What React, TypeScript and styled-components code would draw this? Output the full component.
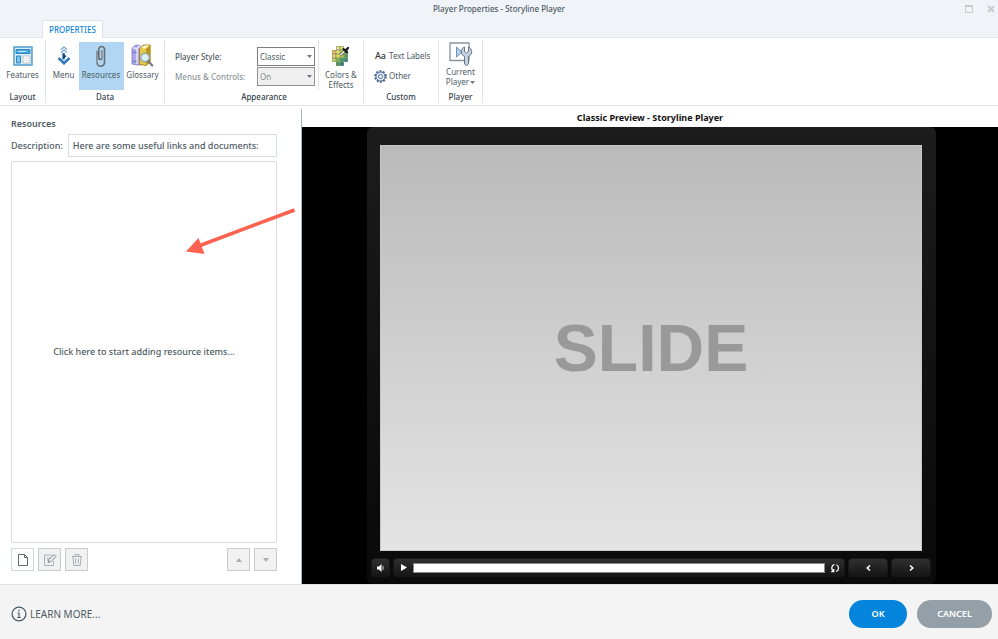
import React from 'react';
import styled, { createGlobalStyle, css } from 'styled-components';

const GlobalStyle = createGlobalStyle`
  *, *::before, *::after { box-sizing: border-box; }
  body { margin: 0; background: #f4f4f4; }
  button, input, select { font: inherit; color: inherit; margin: 0; padding: 0; border-radius: 0; }
  button { background: none; border: 0; cursor: pointer; }
  button:disabled { cursor: default; }
  svg { display: block; flex: none; }
`;

const Window = styled.div`
  display: flex;
  flex-direction: column;
  min-height: 100vh;
  background: #fff;
  color: #4d5b64;
  font-family: 'Noto Sans', 'Open Sans', sans-serif;
  font-size: 8px;
  line-height: 10px;
`;

const TitleBar = styled.header`
  display: grid;
  grid-template-columns: 1fr auto 1fr;
  align-items: center;
  height: 18px;
  padding: 0 2px;
  background: #f0f4f8;
`;

const WindowTitle = styled.h1`
  grid-column: 2;
  margin: 0;
  font-size: 8px;
  font-weight: 500;
`;

const WindowActions = styled.div`
  display: flex;
  justify-content: flex-end;
  gap: 12px;
  color: #c9c9c9;
`;

const TabBar = styled.nav`
  display: flex;
  height: 20px;
  padding: 2px 42px 0;
  background: #f0f4f8;
  border-bottom: 1px solid #dfe6eb;
`;

const Tab = styled.button`
  height: 18px;
  padding: 0 6px;
  background: #fff;
  border: 1px solid #dbe4ea;
  border-bottom: 0;
  color: #0f83dc;
  font-weight: 500;
  white-space: nowrap;
`;

const Ribbon = styled.div`
  display: flex;
  height: 68px;
  padding-top: 2px;
  border-bottom: 1px solid #e2e4e6;
`;

const Group = styled.section<{ $width: number }>`
  display: flex;
  flex-direction: column;
  flex: none;
  width: ${(p) => p.$width}px;
  height: 63px;
  border-right: 1px solid #dfe5e9;
`;

const GroupBody = styled.div`
  display: flex;
  flex: 1;
  justify-content: center;
`;

const GroupName = styled.h2`
  margin: 0;
  padding-bottom: 1px;
  font-size: 8px;
  font-weight: 500;
  line-height: 10px;
  text-align: center;
  color: #36434b;
`;

const Tool = styled.button<{ $width: number; $active?: boolean }>`
  display: flex;
  flex-direction: column;
  align-items: center;
  flex: none;
  width: ${(p) => p.$width}px;
  height: 48px;
  margin-top: 2px;
  white-space: nowrap;
  background: ${(p) => (p.$active ? '#b0d6f3' : 'transparent')};
`;

const ToolIcon = styled.span`
  display: flex;
  align-items: center;
  justify-content: center;
  height: 28px;
`;

const AppearanceFields = styled.div`
  display: grid;
  grid-template-columns: 82px 58px;
  grid-template-rows: 19px 19px;
  row-gap: 1px;
  align-items: center;
  align-content: start;
  flex: 1;
  height: 50px;
  padding: 7px 0 0 10px;
  border-right: 1px solid #dfe5e9;
`;

const FieldLabel = styled.label<{ $muted?: boolean }>`
  font-weight: 500;
  color: ${(p) => (p.$muted ? '#8d969c' : 'inherit')};
`;

const SelectBox = styled.div`
  display: grid;
  align-items: center;
  svg { grid-area: 1 / 1; justify-self: end; margin-right: 3px; pointer-events: none; }
`;

const Select = styled.select`
  grid-area: 1 / 1;
  appearance: none;
  width: 58px;
  height: 19px;
  padding-left: 2px;
  background: #fff;
  border: 1px solid #7b7d7f;
  &:disabled { background: #f0f0f0; color: #8a8a8a; opacity: 1; border-color: #909294; }
`;

const CustomList = styled.div`
  display: flex;
  flex-direction: column;
  align-items: flex-start;
  flex: 1;
  gap: 4px;
  padding: 8px 0 0 10px;
`;

const CustomItem = styled.button`
  display: flex;
  align-items: center;
  gap: 2px;
  height: 16px;
  white-space: nowrap;
`;

const LetterIcon = styled.span`
  width: 13px;
  font-size: 9px;
  font-weight: 500;
  color: #35383b;
`;

const Caret = styled.span`
  display: inline-block;
  margin-left: 1px;
  vertical-align: middle;
`;

const Main = styled.main`
  display: flex;
  flex: 1;
  padding-top: 3px;
`;

const Sidebar = styled.section`
  display: flex;
  flex-direction: column;
  flex: none;
  width: 302px;
  padding: 9px 24px 13px 11px;
  border-right: 1px solid #a9b3bb;
  font-size: 9px;
  font-weight: 500;
  line-height: 12px;
`;

const SidebarTitle = styled.h2`
  margin: 0 0 4px;
  font-size: 9px;
  font-weight: 600;
  line-height: 12px;
`;

const DescriptionRow = styled.div`
  display: flex;
  align-items: center;
  gap: 5px;
  margin-bottom: 4px;
`;

const DescriptionInput = styled.input`
  flex: 1;
  min-width: 0;
  height: 23px;
  padding: 0 4px;
  border: 1px solid #d5dfe5;
`;

const ResourceList = styled.button`
  flex: 1;
  border: 1px solid #d9dde0;
`;

const ItemToolbar = styled.div`
  display: flex;
  gap: 4px;
  margin-top: 5px;
`;

const IconButton = styled.button`
  display: flex;
  align-items: center;
  justify-content: center;
  width: 23px;
  height: 23px;
  background: #fff;
  border: 1px solid #cfdae1;
  color: #5d6b73;
  &:disabled { background: #f1f1f1; border-color: #c9cccf; color: #abafb2; }
`;

const Spacer = styled.span`
  flex: 1;
`;

const Preview = styled.section`
  display: flex;
  flex-direction: column;
  flex: 1;
  min-width: 0;
`;

const PreviewTitle = styled.h2`
  margin: 0;
  font-size: 9px;
  font-weight: 700;
  line-height: 18px;
  text-align: center;
  color: #111;
`;

const Stage = styled.div`
  display: flex;
  flex: 1;
  padding: 0 62px 0 65px;
  background: #000;
`;

const Player = styled.div`
  display: flex;
  flex-direction: column;
  flex: 1;
  padding: 18px 14px 0 13px;
  border-radius: 6px;
  background: linear-gradient(#1c1c1c, #0b0b0b 85%);
`;

const Slide = styled.div`
  display: flex;
  align-items: center;
  justify-content: center;
  flex: 1;
  border: 1px solid #c5c9c9;
  background: linear-gradient(#bababa, #e4e4e4);
  font-family: 'Liberation Sans', Arial, sans-serif;
  font-size: 66px;
  font-weight: 700;
  line-height: 76px;
  color: #999;
`;

const Controls = styled.div`
  display: flex;
  gap: 5px;
  height: 33px;
  margin: 0 -8px;
  padding-top: 8px;
  color: #fff;
`;

const controlFace = css`
  display: flex;
  align-items: center;
  justify-content: center;
  height: 17px;
  border-radius: 3px;
  background: linear-gradient(#303030, #151515);
  box-shadow: 0 0 0 1px #181818;
`;

const ControlButton = styled.button<{ $width: number }>`
  ${controlFace}
  width: ${(p) => p.$width}px;
`;

const SeekBar = styled.div`
  ${controlFace}
  flex: 1;
`;

const SeekButton = styled.button`
  display: flex;
  align-items: center;
  justify-content: center;
  width: 19px;
  height: 17px;
`;

const SeekTrack = styled.input`
  appearance: none;
  flex: 1;
  min-width: 0;
  height: 10px;
  background: #fff;
  border: 1px solid #888;
  &::-webkit-slider-thumb { appearance: none; width: 1px; height: 8px; background: #fff; }
`;

const Footer = styled.footer`
  display: flex;
  align-items: center;
  height: 55px;
  padding: 3px 6px 0 11px;
  background: #f4f4f4;
  border-top: 1px solid #dfe4e6;
  font-size: 10px;
`;

const LearnMore = styled.a`
  display: flex;
  align-items: center;
  gap: 3px;
  color: #4d5b64;
  text-decoration: none;
`;

const PillButton = styled.button<{ $primary?: boolean }>`
  min-width: ${(p) => (p.$primary ? 58 : 75)}px;
  height: 28px;
  margin-left: 10px;
  padding: 0 16px;
  border-radius: 14px;
  background: ${(p) => (p.$primary ? '#0584dc' : '#949fa8')};
  color: #fff;
  font-size: 9px;
  font-weight: 600;
`;

const Pointer = styled.svg`
  position: absolute;
  left: 184px;
  top: 206px;
  pointer-events: none;
`;

const DropIcon = () => (
  <svg width="5" height="3" viewBox="0 0 5 3"><path d="M0 0h5L2.5 3z" fill="#727779" /></svg>
);

const FeaturesIcon = () => (
  <svg width="20" height="20" viewBox="0 0 20 20">
    <rect x="1" y="1" width="18" height="18" fill="#d8eefb" stroke="#4898c6" strokeWidth="1.4" />
    <path d="M3 3.5h14v4H3z" fill="#48a9df" stroke="#3389bd" />
    <path d="M5 5.5h8" stroke="#c6e8fa" />
    <path d="M3.5 10h4v7h-4z" fill="#79c3e9" stroke="#3389bd" />
    <path d="M10 10h7v7h-7z" fill="#fff" stroke="#bcc2c6" />
    <path d="M11.5 12.5h4M11.5 14.5h4" stroke="#ddd" />
  </svg>
);

const MenuIcon = () => (
  <svg width="14" height="20" viewBox="0 0 14 20" fill="none">
    <path d="M4 3.500l3-2.500 3 2.500M4 6.500l3-2.500 3 2.500" stroke="#6da0d0" strokeWidth="1.200" />
    <path d="M6.500 7v6.500" stroke="#5c97cd" strokeWidth="3" />
    <path d="M6 7l3.500 3.200L6 13.500z" fill="#164983" />
    <path d="M1.500 12L7 17.200l5.500-5.200" stroke="#3479bd" strokeWidth="2.600" />
  </svg>
);

const ClipIcon = () => (
  <svg width="12" height="24" viewBox="0 0 12 24" fill="none" strokeLinecap="round">
    <path d="M2 7.500v11a3.600 3.600 0 0 0 7.500 0V4.500a3 3 0 0 0-5.700 0V14a1.500 1.500 0 0 0 3 0V7" stroke="#656c73" strokeWidth="1.600" />
    <path d="M2 8v10.500M6.800 8v6" stroke="#c5ccd2" strokeWidth=".6" />
  </svg>
);

const GlossaryIcon = () => (
  <svg width="23" height="24" viewBox="0 0 23 24">
    <path d="M1 4l4-3 4.500.5V21H6.500L1 20z" fill="#aaa7ed" stroke="#7d7abf" strokeWidth=".8" />
    <path d="M1.800 3.800L6 4.500V20M6.500 4l3-2.500" stroke="#f6f5ff" strokeWidth="1.200" fill="none" />
    <path d="M1.500 8l4 .5M1.500 17l4 .5" stroke="#6d68b8" />
    <path d="M8.500 4.500L12.500 1H19v17l-4 3.500-6.500-1z" fill="#e3c84d" stroke="#967613" strokeWidth=".8" />
    <path d="M9.500 4l4.500-2.500h4L14.500 4.500z" fill="#fff9cf" />
    <path d="M15 5l4.500-4v17L15 21.500z" fill="#b99618" />
    <circle cx="14" cy="13.500" r="4.200" fill="#d8effa" stroke="#8ba5b2" strokeWidth="1.200" />
    <path d="M17.200 17l4 4.500" stroke="#77797c" strokeWidth="2.200" strokeLinecap="round" />
  </svg>
);

const ColorCells: Array<[number, number, string]> = [
  [4, 1, '#e9dc9a'], [8, 1, '#e8e26d'],
  [0, 5, '#f2b45a'], [4, 5, '#f4e661'], [8, 5, '#d5dc4e'], [12, 5, '#8fbf55'],
  [0, 9, '#ecca78'], [4, 9, '#efe04c'], [8, 9, '#a5c94c'], [12, 9, '#4b9e5f'],
  [4, 13, '#74b255'], [8, 13, '#3b9560'], [12, 13, '#2b7d8c'], [0, 13, '#c6ce62'],
  [4, 17, '#3f8f5c'], [8, 17, '#28748a'],
];

const ColorsIcon = () => (
  <svg width="18" height="20" viewBox="0 0 18 20">
    {ColorCells.map(([x, y, fill]) => (
      <rect key={`${x}-${y}`} x={x + 0.2} y={y - 0.8} width="3.6" height="3.6" fill={fill} stroke="#66844e" strokeWidth=".4" />
    ))}
    <path d="M8.500 9L13 4.500" stroke="#555c48" strokeWidth="3" />
    <path d="M8.500 9L13 4.500" stroke="#efefe2" strokeWidth="1.600" />
    <path d="M11.500 3l3.500 3.500M13.500 4.500L16 2" stroke="#17191b" strokeWidth="2.300" strokeLinecap="round" />
  </svg>
);

const GearIcon = () => (
  <svg width="13" height="13" viewBox="0 0 13 13" fill="none">
    <circle cx="6.5" cy="6.5" r="5.300" stroke="#466588" strokeWidth="2" strokeDasharray="2 1.330" />
    <circle cx="6.5" cy="6.5" r="4.500" fill="#dbe7f5" stroke="#506f94" />
    <circle cx="6.5" cy="6.5" r="2" fill="#fff" stroke="#506f94" />
  </svg>
);

const PlayerIcon = () => (
  <svg width="24" height="25" viewBox="0 0 24 25">
    <path d="M1 1h19v17.500H1z" fill="#fff" stroke="#87949e" strokeWidth="1.300" />
    <path d="M7.500 5v10l5.500-5z" fill="#b0d4ee" stroke="#6b93b4" />
    <path d="M15.500 5c-4 1.500-4.500 7.500 0 9.300V22q2 3 4 0v-7.700c4.500-1.800 4-7.800 0-9.300v4.500l-2 1.500-2-1.500z" fill="#c5d1dd" stroke="#647386" />
  </svg>
);

export default function App() {
  return (
    <Window>
      <GlobalStyle />
      <TitleBar>
        <WindowTitle>Player Properties - Storyline Player</WindowTitle>
        <WindowActions>
          <button aria-label="Maximize">
            <svg width="10" height="10" viewBox="0 0 10 10" fill="none" stroke="currentColor"><path d="M1.500 1.500h7v7h-7zM1.500 2.500h7" /></svg>
          </button>
          <button aria-label="Close">
            <svg width="10" height="10" viewBox="0 0 10 10" stroke="currentColor" strokeWidth="1.800"><path d="M2 2l6 6M8 2L2 8" /></svg>
          </button>
        </WindowActions>
      </TitleBar>
      <TabBar><Tab>PROPERTIES</Tab></TabBar>

      <Ribbon>
        <Group $width={46}>
          <GroupBody><Tool $width={44}><ToolIcon><FeaturesIcon /></ToolIcon>Features</Tool></GroupBody>
          <GroupName>Layout</GroupName>
        </Group>
        <Group $width={119}>
          <GroupBody>
            <Tool $width={30}><ToolIcon><MenuIcon /></ToolIcon>Menu</Tool>
            <Tool $width={45} $active><ToolIcon><ClipIcon /></ToolIcon>Resources</Tool>
            <Tool $width={38}><ToolIcon><GlossaryIcon /></ToolIcon>Glossary</Tool>
          </GroupBody>
          <GroupName>Data</GroupName>
        </Group>
        <Group $width={199}>
          <GroupBody>
            <AppearanceFields>
              <FieldLabel htmlFor="style">Player Style:</FieldLabel>
              <SelectBox>
                <Select id="style"><option>Classic</option></Select>
                <DropIcon />
              </SelectBox>
              <FieldLabel htmlFor="menus" $muted>Menus &amp; Controls:</FieldLabel>
              <SelectBox>
                <Select id="menus" disabled><option>On</option></Select>
                <DropIcon />
              </SelectBox>
            </AppearanceFields>
            <Tool $width={44}><ToolIcon><ColorsIcon /></ToolIcon><span>Colors &amp;<br />Effects</span></Tool>
          </GroupBody>
          <GroupName>Appearance</GroupName>
        </Group>
        <Group $width={75}>
          <GroupBody>
            <CustomList>
              <CustomItem><LetterIcon>Aa</LetterIcon>Text Labels</CustomItem>
              <CustomItem><GearIcon />Other</CustomItem>
            </CustomList>
          </GroupBody>
          <GroupName>Custom</GroupName>
        </Group>
        <Group $width={44}>
          <GroupBody>
            <Tool $width={40}>
              <PlayerIcon />
              <span>Current<br />Player<Caret><DropIcon /></Caret></span>
            </Tool>
          </GroupBody>
          <GroupName>Player</GroupName>
        </Group>
      </Ribbon>

      <Main>
        <Sidebar>
          <SidebarTitle>Resources</SidebarTitle>
          <DescriptionRow>
            <label htmlFor="description">Description:</label>
            <DescriptionInput id="description" defaultValue="Here are some useful links and documents:" />
          </DescriptionRow>
          <ResourceList>Click here to start adding resource items...</ResourceList>
          <ItemToolbar>
            <IconButton aria-label="Add resource">
              <svg width="12" height="14" viewBox="0 0 12 14" fill="none" stroke="currentColor"><path d="M1.500 1.500h6l3 3v8h-9zM7.500 1.500v3h3" /></svg>
            </IconButton>
            <IconButton aria-label="Edit resource" disabled>
              <svg width="14" height="14" viewBox="0 0 14 14" fill="none" stroke="currentColor"><path d="M9 2H1.500v10.500h9V8M3.500 5h4M3.500 7h2" /><path d="M5 9.500l1-3L11 1.500l2 2-5 5z" fill="#f1f1f1" stroke="#7f8588" /></svg>
            </IconButton>
            <IconButton aria-label="Delete resource" disabled>
              <svg width="12" height="14" viewBox="0 0 12 14" fill="none" stroke="currentColor"><path d="M1 3.500h10M4 3V1.500h4V3M2 4l.8 8.500h6.400L10 4M4.600 5.500v5M7.400 5.500v5" /></svg>
            </IconButton>
            <Spacer />
            <IconButton aria-label="Move up" disabled>
              <svg width="6" height="4" viewBox="0 0 6 4"><path d="M0 4l3-4 3 4z" fill="currentColor" /></svg>
            </IconButton>
            <IconButton aria-label="Move down" disabled>
              <svg width="6" height="4" viewBox="0 0 6 4"><path d="M0 0l3 4 3-4z" fill="currentColor" /></svg>
            </IconButton>
          </ItemToolbar>
        </Sidebar>

        <Preview>
          <PreviewTitle>Classic Preview - Storyline Player</PreviewTitle>
          <Stage>
            <Player>
              <Slide>SLIDE</Slide>
              <Controls>
                <ControlButton $width={17} aria-label="Volume">
                  <svg width="9" height="8" viewBox="0 0 9 8"><path d="M1 2.500h2L5.500 0v8L3 5.500H1z" fill="#fff" /><path d="M7 2v4" stroke="#ccc" /></svg>
                </ControlButton>
                <SeekBar>
                  <SeekButton aria-label="Play">
                    <svg width="6" height="7" viewBox="0 0 6 7"><path d="M0 0v7l6-3.500z" fill="#fff" /></svg>
                  </SeekButton>
                  <SeekTrack type="range" aria-label="Seek" defaultValue={0} />
                  <SeekButton aria-label="Replay">
                    <svg width="10" height="10" viewBox="0 0 10 10" fill="none" stroke="#fff" strokeWidth="1.200"><path d="M6 8.500A3.600 3.600 0 0 0 6.500 1.800M4 8.300A3.600 3.600 0 0 1 4.500 1.500M1.200 8.600h2.600V6" /></svg>
                  </SeekButton>
                </SeekBar>
                <ControlButton $width={38} aria-label="Previous">
                  <svg width="5" height="6" viewBox="0 0 5 6" fill="none" stroke="#fff" strokeWidth="1.500"><path d="M4 .5L1.200 3 4 5.500" /></svg>
                </ControlButton>
                <ControlButton $width={38} aria-label="Next">
                  <svg width="5" height="6" viewBox="0 0 5 6" fill="none" stroke="#fff" strokeWidth="1.500"><path d="M1 .5L3.800 3 1 5.500" /></svg>
                </ControlButton>
              </Controls>
            </Player>
          </Stage>
        </Preview>
      </Main>

      <Footer>
        <LearnMore href="#learn">
          <svg width="16" height="16" viewBox="0 0 16 16" fill="none" stroke="#4d5b64">
            <circle cx="8" cy="8" r="6.900" strokeWidth="1.300" />
            <path d="M6.500 7H8v4.500M6.300 11.500h3.500" strokeWidth="1.200" />
            <circle cx="8" cy="4.500" r=".5" />
          </svg>
          LEARN MORE...
        </LearnMore>
        <Spacer />
        <PillButton $primary>OK</PillButton>
        <PillButton>CANCEL</PillButton>
      </Footer>

      <Pointer width="114" height="50" viewBox="0 0 114 50" aria-hidden="true">
        <path d="M110.500 4L16 39.500" stroke="#fd6250" strokeWidth="3.500" />
        <path d="M2 45.500L14.500 32l6 16z" fill="#fd6250" />
      </Pointer>
    </Window>
  );
}
